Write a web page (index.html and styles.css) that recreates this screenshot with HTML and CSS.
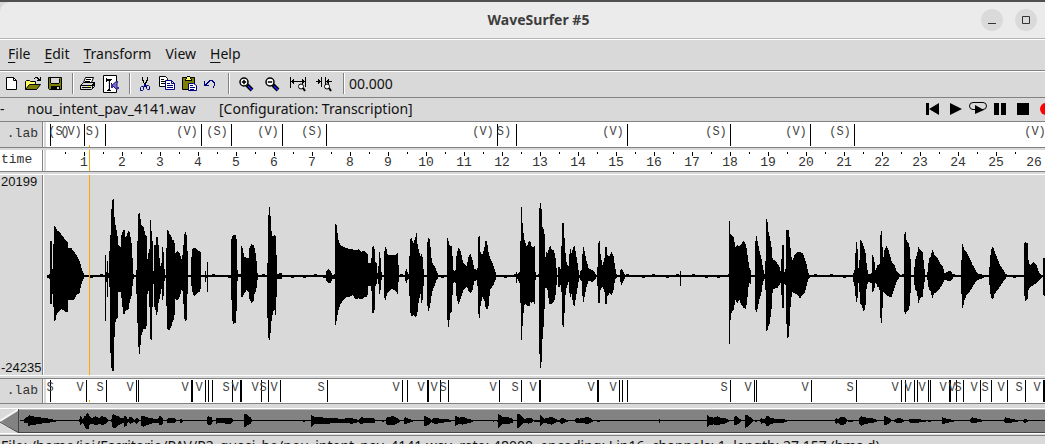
FILE: index.html
```html
<!DOCTYPE html>
<html lang="en">
<head>
<meta charset="utf-8">
<title>WaveSurfer #5</title>
<link rel="stylesheet" href="styles.css">
</head>
<body>
<div class="window">
  <header class="titlebar">
    <h1 class="title">WaveSurfer #5</h1>
    <div class="window-controls">
      <button class="round" aria-label="Minimize"><svg width="22" height="22"><path d="M7 14h8v1H7z" fill="#333"/></svg></button>
      <button class="round" aria-label="Maximize"><svg width="22" height="22"><path d="M7.500 7.500h7v7h-7z" fill="none" stroke="#333"/></svg></button>
    </div>
  </header>

  <nav class="menubar">
    <button><u>F</u>ile</button>
    <button><u>E</u>dit</button>
    <button><u>T</u>ransform</button>
    <button>View</button>
    <button><u>H</u>elp</button>
  </nav>

  <div class="toolbar">
    <button aria-label="New"><svg width="16" height="16"><path d="M3.500 1.500h7l3 3v9h-10z" fill="#fff" stroke="#000"/><path d="M10.500 1.500v3h3" fill="none" stroke="#000"/></svg></button>
    <button aria-label="Open"><svg width="16" height="16"><path d="M.5 13.500v-8l1-1h3l1 1h5v3" fill="#ffff66" stroke="#000"/><path d="M.5 13.500l4-5h11l-4 5z" fill="#808000" stroke="#000"/><path d="M9 3V2h1V1h3v1h1v1h1V1h1v4h-4V4h1V3h-1V2h-2v1z" fill="#000"/></svg></button>
    <button aria-label="Save"><svg width="16" height="16"><path d="M1.500 1.500h13v12h-12l-1-1z" fill="#808000" stroke="#000"/><path d="M4 2h8v6H4z" fill="#d9d9d9"/><path d="M4 7h8v1H4zM4 10h9v4H4zM3 2h1v5H3zM12 3h1v4h-1z" fill="#000"/><path d="M10 11h2v2h-2z" fill="#d9d9d9"/></svg></button>
    <span class="sep"></span>
    <button aria-label="Print"><svg width="16" height="16"><path d="M5.500 1.500h8l-2 5h-8z" fill="#fff" stroke="#000"/><path d="M6 3h5v1H6zM5 5h5v1H5z" fill="#000"/><path d="M.5 9.500l3-3h11v4l-3 3h-11z" fill="#d9d9d9" stroke="#000"/><path d="M1 9h11v1H1zM12 8h1v5h-1zM2 11h9v1H2zM13 6h2v4h-2z" fill="#000"/><path d="M8 10h2v1H8z" fill="#ff0"/></svg></button>
    <button class="prefs" aria-label="Preferences"><svg width="18" height="18"><path d="M2.500.5h13v17h-13z" fill="#fff" stroke="#000"/><path d="M5 3h1v1h5v1h-1v1H9v9h1v1H6v-1h1V6H6v1H5zM10 8h1v1h-1z" fill="#000"/><path d="M7 6h1v8H7z" fill="#d9d9d9"/><path d="M11 10l5-4v9z" fill="#7a6ad0" stroke="#22226a"/><path d="M10 9h2v4h-2zM16 6h1v2h-1zM16 12h2v2h-2z" fill="#333399"/></svg></button>
    <span class="sep"></span>
    <button aria-label="Cut"><svg width="16" height="16"><path d="M5 1h1v3h1v3h1v2H7V7H6V5H5zM10 1h1v4h-1v2H9v3H8V6h1V4h1z" fill="#000"/><g fill="none" stroke="#000080"><path d="M7.500 8v3M8.500 8v3"/><path d="M4.500 10.500h2v3l-1 1h-2v-3zM9.500 9.500h2l1 1v3h-2l-1-1z"/></g></svg></button>
    <button aria-label="Copy"><svg width="16" height="16"><path d="M.5.500h6l2 2v8h-8z" fill="#fff" stroke="#000"/><path d="M2 3h3v1H2zM2 5h5v1H2zM2 7h5v1H2z" fill="#000"/><path d="M6.500 4.500h6l3 3v6h-9z" fill="#fff" stroke="#000080"/><path d="M12.500 4.500v3h3" fill="none" stroke="#000080"/><path d="M8 7h3v1H8zM8 9h6v1H8zM8 11h6v1H8z" fill="#000080"/></svg></button>
    <button aria-label="Paste"><svg width="16" height="16"><path d="M1.500 1.500h12v12h-12z" fill="#808000" stroke="#000"/><path d="M4 3h1V1h1V0h3v1h1v2h1v2H4z" fill="#000"/><path d="M6 1h3v2H6zM5 3h5v1H5z" fill="#ffff66"/><path d="M7.500 7.500h5l3 2v5h-8z" fill="#fff" stroke="#000080"/><path d="M9 9h3v1H9zM9 11h5v1H9zM9 13h4v1H9z" fill="#000080"/></svg></button>
    <button aria-label="Undo"><svg width="16" height="16"><path d="M1 5h1v3h1V7h1V6h1V5h1V4h4v1h1v1h1v4h-1v2h-1v-2h1V7h-1V6H9V5H7v1H6v1H5v1H4v1h2v1H1z" fill="#000080"/></svg></button>
    <span class="sep"></span>
    <button class="wide" aria-label="Zoom in"><svg width="16" height="16"><circle cx="6" cy="6" r="4" fill="#fff" stroke="#000" stroke-width="1.500"/><path d="M4 5.500h4v1H4zM5.500 4h1v4h-1z" fill="#000" stroke="#000" stroke-width=".5"/><path d="M9 9l5 5" stroke="#000" stroke-width="4"/><path d="M10 10l4 4" stroke="#2222ff" stroke-width="1.500"/></svg></button>
    <button class="wide" aria-label="Zoom out"><svg width="16" height="16"><circle cx="6" cy="6" r="4" fill="#fff" stroke="#000" stroke-width="1.500"/><path d="M4 5.500h4v1H4z" fill="#000" stroke="#000" stroke-width=".5"/><path d="M9 9l5 5" stroke="#000" stroke-width="4"/><path d="M10 10l4 4" stroke="#2222ff" stroke-width="1.500"/></svg></button>
    <button class="wide" aria-label="Zoom out full"><svg width="18" height="16"><path d="M0 1h1v11H0zM15 1h1v10h-1zM1 5h14v1H1zM2 4h1v3H2zM3 3h1v5H3zM13 4h1v3h-1zM12 3h1v5h-1z" fill="#000"/><circle cx="11" cy="10.500" r="2.500" fill="#fff" stroke="#000"/><path d="M13 12l2 3" stroke="#000" stroke-width="2"/></svg></button>
    <button class="wide" aria-label="Zoom to selection"><svg width="18" height="16"><path d="M5 1h1v10H5zM9 1h1v8H9zM0 5h5v1H0zM3 4h1v3H3zM2 3h1v5H2zM10 5h6v1h-6zM11 4h1v3h-1zM12 3h1v5h-1z" fill="#000"/><circle cx="11" cy="10.500" r="2.500" fill="#fff" stroke="#000"/><path d="M13 12l2 3" stroke="#000" stroke-width="2"/></svg></button>
    <span class="sep"></span>
    <output class="clock">00.000</output>
  </div>

  <div class="filebar">
    <span class="dash">-</span>
    <span class="filename">nou_intent_pav_4141.wav</span>
    <span>[Configuration: Transcription]</span>
    <div class="transport">
      <button aria-label="To start"><svg width="14" height="14"><path d="M0 1h3v12H0zM13 1v12L3 7z"/></svg></button>
      <button aria-label="Play"><svg width="14" height="14"><path d="M1 1v12l12-6z"/></svg></button>
      <button class="loop" aria-label="Loop"><svg width="20" height="14"><rect x="1.500" y=".5" width="17" height="7" rx="3.500" fill="none" stroke="#000"/><path d="M7 3v9l9-4z"/></svg></button>
      <button aria-label="Pause"><svg width="14" height="14"><path d="M1 1h5v12H1zM8 1h5v12H8z"/></svg></button>
      <button aria-label="Stop"><svg width="14" height="14"><path d="M1 1h12v12H1z"/></svg></button>
      <button aria-label="Record"><svg width="14" height="14"><circle cx="7" cy="7" r="6" fill="#f00"/></svg></button>
    </div>
  </div>

  <main class="panes">
    <section class="pane paper">
      <div class="name tier">.lab</div>
      <div class="track"><svg id="upper" width="2000" height="25"></svg></div>
    </section>
    <section class="pane paper">
      <div class="name time">time</div>
      <div class="track"><svg id="ruler" width="2000" height="21"></svg></div>
    </section>
    <section class="pane wave">
      <div class="name range"><span>20199</span><span>-24235</span></div>
      <div class="track"><svg id="wave" width="1001" height="200" viewBox="132 165 3003 600"></svg></div>
    </section>
    <section class="pane paper">
      <div class="name tier">.lab</div>
      <div class="track"><svg id="lower" width="2000" height="24"></svg></div>
    </section>
  </main>

  <div class="overview">
    <button class="scroll" aria-label="Scroll left"><svg width="19" height="24"><path d="M0 12L19 0v24z" fill="#828282"/><path d="M0 12L19 0" stroke="#f5f5f5" stroke-width="2"/><path d="M0 13L19 24M18.500 0v24" stroke="#444" fill="none"/></svg></button>
    <div class="map"><svg id="overview" width="1026" height="22" viewBox="57 119 3078 66"></svg></div>
  </div>

  <footer class="status">File: /home/joi/Escritorio/PAV/P2_quasi_be/nou_intent_pav_4141.wav&nbsp; rate: 48000&nbsp; encoding: Lin16&nbsp; channels: 1&nbsp; length: 27.157 (hms.d)</footer>
</div>
<script src="app.js"></script>
</body>
</html>
```

FILE: styles.css
```css
* { box-sizing: border-box; }

html, body { height: 100%; }

body {
  margin: 0;
  overflow: hidden;
  background: #d9d9d9;
  color: #111;
  font: 14px/20px "Noto Sans", "Open Sans", sans-serif;
}

button {
  margin: 0;
  padding: 0;
  border: 0;
  background: none;
  color: inherit;
  font: inherit;
}

svg { display: block; flex: none; }

.window { border-top: 2px solid #505050; background: #d9d9d9; }

.titlebar {
  display: flex;
  align-items: center;
  height: 37px;
  padding-left: 96px;
  border-bottom: 1px solid #b4b4b4;
  border-top-left-radius: 10px;
  background: #ebebeb;
}

.title {
  flex: 1;
  margin: 0;
  color: #3d3d3d;
  font: bold 14px/20px "Noto Sans", "Open Sans", sans-serif;
  text-align: center;
}

.window-controls { display: flex; gap: 12px; padding-right: 8px; }

.round { width: 22px; height: 22px; border-radius: 50%; background: #dadada; }

.menubar {
  display: flex;
  align-items: center;
  gap: 14px;
  height: 32px;
  padding: 0 0 2px 8px;
  border-top: 1px solid #fff;
  border-bottom: 1px solid #828282;
}

.menubar u { text-underline-offset: 3px; text-decoration-thickness: 1px; }

.toolbar {
  display: flex;
  align-items: center;
  height: 27px;
  padding: 0 0 2px 1px;
  border-top: 1px solid #fff;
  border-bottom: 1px solid #828282;
}

.toolbar button { width: 22px; height: 20px; padding: 2px; }
.toolbar .prefs { width: 24px; padding: 1px; }
.toolbar .wide { width: 26px; padding: 2px 4px; }

.sep {
  width: 2px;
  height: 21px;
  margin: 0 4px 0 5px;
  border-left: 1px solid #828282;
  border-right: 1px solid #fff;
}

.filebar {
  display: flex;
  align-items: center;
  height: 24px;
  padding-bottom: 2px;
  overflow: hidden;
  border-bottom: 1px solid #828282;
}

.dash { width: 27px; }
.filename { width: 192px; }

.transport {
  display: flex;
  gap: 9px;
  margin-left: auto;
  margin-right: -8px;
}

.loop { margin: 0 -4px; }

.pane {
  display: flex;
  overflow: hidden;
  border-bottom: 1px solid #828282;
}

.pane + .pane { margin-top: 2px; }

.name {
  flex: none;
  width: 43px;
  padding-left: 1px;
  border-right: 1px solid #828282;
  color: #333;
  font: 13px/20px "Liberation Mono", monospace;
}

.tier { padding: 2px 4px 0 0; text-align: right; }
.time { background: #fff; }

.track { flex: 1; overflow: hidden; border-left: 1px solid #fff; }

.paper .track { background: #fff; box-shadow: inset 2px 0 #d9d9d9; }

.wave { margin-bottom: 2px; border-top: 1px solid #fff; border-bottom: 1px solid #fff; }
.wave + .pane { border-top: 1px solid #828282; }

.range {
  display: flex;
  flex-direction: column;
  justify-content: space-between;
  color: #111;
  font: 13px/14px "Liberation Sans", sans-serif;
}

.overview {
  display: flex;
  margin-top: 4px;
  border-top: 1px solid #fff;
  border-bottom: 1px solid #fff;
}

.scroll { flex: none; width: 19px; }

.map {
  flex: 1;
  overflow: hidden;
  border-top: 1px solid #b4b4b4;
  border-bottom: 1px solid #444;
  background: #828282;
}

.status {
  margin-top: 1px;
  padding-left: 1px;
  border-top: 1px solid #828282;
  white-space: nowrap;
}

.digits { fill: #333; font: 13px "Liberation Mono", monospace; text-anchor: middle; }
.mark { fill: #444; font: 12px "Liberation Mono", monospace; text-anchor: middle; }
.line { fill: #000; shape-rendering: crispEdges; }
.shape { fill: #000; shape-rendering: crispEdges; }
.cursor { fill: #ffa500; shape-rendering: crispEdges; }
```

FILE: app.js
```javascript
const NS = "http://www.w3.org/2000/svg";
const LEFT = 44;

function add(parent, tag, attrs, text) {
  const node = document.createElementNS(NS, tag);
  for (const key in attrs) node.setAttribute(key, attrs[key]);
  if (text) node.textContent = text;
  parent.appendChild(node);
  return node;
}

function bar(svg, x, y, height, width = 1, cls = "line") {
  add(svg, "rect", { x: x - LEFT, y, width, height, class: cls });
}

const upper = document.getElementById("upper");
for (const x of [50, 84, 105, 201, 231, 282, 326, 497, 516, 627, 730, 810, 854]) bar(upper, x, 2, 22);
for (const [x, t] of [[59, "(S)"], [71, "(V)"], [93, " S)"], [187, "(V)"], [217, "(S)"], [268, "(V)"], [312, "(S)"],
  [483, "(V)"], [504, " S)"], [613, "(V)"], [716, "(S)"], [796, "(V)"], [840, "(S)"], [1035, "(V)"]])
  add(upper, "text", { x: x - LEFT, y: 13, class: "mark" }, t);
bar(upper, 89, 23, 2, 1, "cursor");

const ruler = document.getElementById("ruler");
for (let n = 1; n < 52; n++) bar(ruler, 46 + 19 * n, 2, n % 2 ? 2 : 4);
for (let n = 1; n < 27; n++) add(ruler, "text", { x: 46 + 38 * n - LEFT, y: 16, class: "digits" }, String(n));
bar(ruler, 89, 0, 21, 1, "cursor");

const lower = document.getElementById("lower");
for (const x of [50, 86, 106, 136, 138, 205, 208, 212, 232, 261, 268, 280, 327, 402, 407, 440, 448, 499, 521, 619, 622, 627,
  730, 754, 756, 811, 856, 901, 905, 914, 917, 928, 930, 956, 963, 980, 991, 1007, 1025]) bar(lower, x, 1, 22);
for (const x of [191, 240, 427, 539, 597, 949, 1043]) bar(lower, x, 1, 22, 2);
for (const [t, xs] of [["S", [50, 100, 226, 263, 321, 443, 515, 724, 850, 958, 985, 1019]],
  ["V", [80, 130, 185, 199, 235, 255, 274, 396, 421, 434, 493, 533, 591, 613, 748, 805, 895, 908, 922, 943, 952, 974, 1001, 1037]]])
  for (const x of xs) add(lower, "text", { x: x - LEFT, y: 12, class: "mark" }, t);
bar(lower, 89, 21, 2, 1, "cursor");

/* Envelopes: x, top, bottom for each sample; three units per pixel. */
function envelope(svg, dx, dy, source) {
  const group = add(svg, "g", { transform: `translate(${dx} ${dy})` });
  for (const burst of source.trim().split("|")) {
    const pts = burst.trim().split(/\s+/).map(p => p.split(",").map(Number));
    const top = pts.map(p => `${p[0]},${p[1]}`);
    const bottom = pts.slice().reverse().map(p => `${p[0]},${p[2]}`);
    add(group, "polygon", { points: top.concat(bottom).join(" "), class: "shape" });
  }
}

const wave = document.getElementById("wave");
add(wave, "rect", { x: 142, y: 465, width: 3000, height: 6, class: "shape" });
for (let x = 142; x < 3100; x += 27 + (x * 7) % 23) add(wave, "rect", { x, y: x % 2 ? 463 : 468, width: 9, height: 6, class: "shape" });

envelope(wave, 0, 0, `
142,466,472 148,462,476 150,460,480 150,363,551 155,363,551 155,448,522 160,445,522 161,316,594 165,318,608 168,325,590 172,333,580 178,335,572 185,345,567 195,358,575 203,365,575 204,385,540 214,384,540 222,395,540 230,407,525 238,420,520 245,445,490 252,464,474 |
315,405,602 318,405,602 318,455,487 321,455,487 321,423,530 324,423,530 324,460,475 328,455,475 329,346,525 332,345,730 334,275,740 336,240,752 341,237,752 343,285,660 347,318,598 353,350,595 355,375,515 362,380,515 364,345,530 370,330,582 375,332,582 377,355,570 382,340,570 386,333,568 390,340,540 394,365,535 396,375,512 399,450,485 401,465,473 |
408,450,487 411,450,555 414,283,660 417,279,701 421,279,701 422,312,655 430,320,627 437,348,627 441,348,615 442,420,525 447,390,508 449,388,575 450,300,655 454,300,660 455,362,660 458,362,545 459,455,485 462,450,500 462,377,555 467,375,570 469,350,585 473,352,575 477,390,535 480,435,537 484,440,500 487,382,540 490,385,535 492,420,510 494,455,475 |
498,440,490 501,330,625 504,327,627 508,340,632 514,350,620 518,360,605 523,362,595 526,398,535 532,393,542 540,400,530 544,420,510 549,400,515 552,350,590 556,333,605 560,345,600 563,400,510 564,455,480 |
573,435,485 576,390,510 582,382,530 588,385,525 595,392,515 600,393,517 603,400,500 603,460,475 |
615,453,485 618,453,485 619,465,475 621,465,475 621,427,515 624,427,515 625,465,473 |
693,420,520 694,358,530 698,345,612 708,345,608 711,370,540 712,440,490 713,460,475 |
722,450,500 723,375,530 728,385,530 733,410,520 740,413,510 746,415,515 748,385,535 755,372,550 760,375,545 764,385,520 768,405,515 771,440,495 773,464,474 |
801,455,490 803,420,625 806,262,660 811,262,658 812,310,625 816,345,590 820,350,575 824,345,570 828,348,595 830,420,510 831,462,475 838,460,478 845,460,477 847,465,472 |
978,455,482 985,448,490 992,455,488 998,465,475 1004,462,477 1005,310,620 1010,315,600 1014,355,575 1020,375,555 1030,380,540 1040,385,530 1051,387,530`);

envelope(wave, 1050, 0, `
0,387,530 8,388,525 15,390,537 26,388,535 35,395,537 42,393,533 50,400,530 53,403,525 54,428,500 60,430,498 64,425,500 66,388,550 66,388,572 69,372,585 74,388,570 76,425,500 80,430,490 82,460,475 85,455,480 87,396,520 90,397,523 93,430,500 95,465,475 |
101,465,475 102,400,530 106,381,542 110,388,525 112,403,518 125,405,508 135,405,510 143,400,522 145,430,490 148,460,475 |
165,460,478 169,445,490 174,460,476 177,462,478 180,357,575 185,355,590 190,370,585 197,350,590 199,333,590 202,370,580 206,390,545 212,408,520 213,402,548 217,405,548 219,430,520 222,462,475 |
231,460,475 232,370,555 235,353,575 240,360,560 243,400,540 246,428,515 255,440,495 260,455,480 265,465,473 |
291,460,478 291,353,582 294,353,620 297,375,620 300,378,582 305,378,575 307,400,530 311,455,485 317,450,490 320,400,535 326,382,553 332,395,535 340,430,510 350,440,500 357,405,515 362,402,518 368,420,510 372,445,485 380,450,480 384,440,510 385,350,580 390,348,602 391,395,560 397,405,530 404,380,545 406,363,560 411,363,572 416,400,555 420,415,510 430,435,495 438,460,478 |
498,455,490 500,455,490 502,462,475 509,455,490 511,400,510 513,262,660 516,262,660 517,305,625 521,345,575 524,362,550 530,380,555 538,362,560 541,365,545 545,380,550 550,380,545 554,378,552 555,430,500 557,465,473 |
567,465,475 567,280,660 570,249,743 574,249,743 576,318,675 580,325,630 584,345,560 585,430,510 588,395,500 593,400,510 597,385,550 601,375,553 606,390,550 612,390,545 616,410,530 620,450,490 |
624,440,500 629,440,500 633,450,490 636,310,540 637,310,615 642,310,623 643,345,590 646,395,530 650,430,500 656,440,485 660,380,540 664,400,520 669,385,548 673,374,563 678,400,530 684,440,495 687,462,475 |
690,455,480 695,450,485 699,375,555 704,395,530 710,425,500 716,445,480 726,450,488 732,455,480 738,465,475 |
741,450,490 743,440,500 745,370,550 750,362,550 751,400,510 757,435,500 763,420,510 766,380,552 771,380,552 772,405,530 778,410,520 784,396,525 790,405,515 795,440,480 800,463,475 |
810,450,480 815,447,495 820,455,485 826,465,473 | 990,453,497 993,453,497 993,465,473`);

envelope(wave, 2100, 135, `
87,168,536 90,168,536 91,205,470 95,210,440 101,215,435 106,245,405 112,240,415 118,245,405 125,235,420 132,228,430 138,238,432 142,265,400 147,300,350 150,315,360 153,315,355 154,330,338 |
165,325,350 165,240,430 169,210,443 173,230,430 178,255,405 184,280,385 189,310,350 194,330,340 197,280,380 198,162,497 202,162,497 204,195,485 208,210,480 214,240,440 218,285,375 225,285,370 232,295,370 238,305,360 243,325,350 246,240,430 251,240,430 252,325,355 257,310,360 259,195,470 262,195,518 267,197,515 271,245,430 276,290,380 284,268,385 292,262,390 300,260,400 308,265,390 314,280,385 320,300,360 326,325,340 330,331,337 |
458,330,340 465,310,370 468,225,412 472,240,410 475,310,350 478,305,370 480,225,415 485,228,420 491,243,440 496,260,430 500,300,365 505,330,350 515,325,355 517,270,380 522,280,378 527,320,350 532,300,365 536,300,365 538,325,350 540,220,445 543,198,475 546,198,475 547,230,445 549,290,380 553,255,385 560,243,390 567,260,395 575,290,395 583,300,370 590,320,350 598,328,337 605,332,336 |
612,332,340 613,210,440 615,202,446 618,202,446 620,230,438 627,235,435 631,265,400 633,325,340 | 642,320,350 648,268,385 651,280,370 654,243,418 660,255,400 668,262,395 672,300,360 675,325,345 |
682,325,340 687,280,375 692,275,380 697,253,400 703,268,385 712,278,380 720,295,370 729,305,355 733,325,345 742,320,347 752,317,347 760,330,338 |
783,332,337 784,300,370 786,237,430 789,237,430 792,255,410 800,262,390 808,278,382 818,300,365 827,315,350 832,325,345 842,327,342 855,332,336 |
867,330,340 870,280,380 875,248,400 880,245,402 882,255,390 890,275,378 900,300,365 910,315,350 918,328,340 |
972,330,345 973,235,390 977,232,410 983,235,400 986,295,370 992,300,365 1000,290,360 1010,300,355 1018,325,345 1025,331,337 | 1029,280,390 1036,278,395`);
add(wave, "rect", { x: 267, y: 165, width: 3, height: 600, class: "cursor" });

const overview = document.getElementById("overview");
add(overview, "rect", { x: 60, y: 150, width: 3075, height: 3, class: "shape" });
envelope(overview, 0, 0, `
72,145,158 74,148,158 78,141,160 84,141,158 86,134,168 92,137,165 105,139,163 120,141,160 140,144,158 155,147,156 171,150,153 |
238,150,153 240,134,163 245,140,162 248,148,157 252,138,165 258,138,177 261,127,178 266,130,175 269,140,162 278,143,160 286,137,165 292,140,163 297,144,160 305,136,164 311,139,163 320,143,158 324,150,153 |
334,150,153 337,133,170 342,132,174 349,136,172 355,138,165 362,142,162 370,144,157 374,136,170 379,140,167 384,148,155 390,138,160 397,143,158 403,149,155 411,143,161 418,150,153 |
423,138,165 430,137,169 440,140,165 452,144,160 465,145,158 474,146,157 480,136,165 486,140,163 490,149,155 | 500,146,157 510,142,159 525,144,158 528,150,153 | 541,147,157 545,147,157 546,150,153 549,147,156 |
621,146,160 624,137,165 630,140,164 635,140,160 638,149,154 | 648,144,160 660,143,158 680,143,160 692,142,160 699,149,154 |
732,130,172 738,130,170 745,138,163 753,141,161 755,149,154 | 909,148,156 916,148,156 |
933,134,170 938,136,167 944,141,162 960,141,161 1000,143,159 1020,145,159 1050,144,159`);
envelope(overview, 1050, 0, `
0,144,160 8,143,160 12,147,157 20,145,158 24,150,153 30,143,160 36,141,160 45,143,158 73,144,159 76,149,154 | 96,148,155 101,148,155 |
108,144,160 114,140,165 121,139,164 127,136,165 136,140,162 145,145,158 150,149,154 | 162,149,154 164,140,163 170,143,160 180,147,156 190,150,153 |
221,150,153 223,136,167 230,139,167 238,143,162 243,149,155 252,143,160 262,142,160 272,146,157 290,147,156 303,148,155 | 314,149,155 317,134,168 322,140,163 330,142,160 336,138,163 350,144,160 369,149,155 |
430,148,155 433,148,155 | 441,148,155 444,148,155 445,130,175 450,134,170 457,140,162 468,139,162 480,142,160 488,146,157 490,150,153 |
500,149,154 503,129,176 508,131,172 514,138,163 525,146,157 535,142,160 546,144,158 550,150,153 559,148,155 570,148,155 571,133,168 575,137,165 582,145,156 592,143,160 605,140,163 615,145,158 628,150,153 635,141,161 645,146,157 654,150,153 | 675,148,155 680,142,160 687,145,158 700,143,158 712,139,161 720,143,158 730,150,153 | 742,148,154 750,148,156 | 927,146,157 930,146,157`);
envelope(overview, 2100, 0, `
20,149,154 22,134,172 27,139,165 40,142,162 52,138,165 60,142,162 78,144,159 88,150,153 | 102,149,154 103,139,164 110,138,163 117,144,160 125,150,153 |
134,148,155 136,133,172 142,135,170 150,140,163 158,147,156 | 165,148,154 172,148,155 | 180,150,153 184,143,160 190,146,157 196,145,160 200,136,168 206,138,167 211,143,160 225,145,159 245,145,159 264,150,153 |
405,148,155 408,143,161 414,147,158 420,140,163 430,140,163 438,143,160 441,150,153 450,148,156 458,148,156 460,150,153 | 477,149,155 480,139,165 485,138,166 492,140,162 500,142,160 515,143,158 530,148,155 |
551,149,155 553,137,164 560,139,163 570,145,157 575,150,153 | 582,149,155 590,145,157 600,142,159 612,150,153 | 627,147,155 635,146,158 655,146,157 680,150,153 | 684,148,155 694,148,155 |
726,150,153 727,141,162 732,143,160 750,147,156 765,150,153 | 810,149,153 815,141,160 824,142,158 850,150,153 | 912,149,154 915,141,159 922,142,158 940,147,156 955,149,154 | 968,149,154 975,145,159 983,149,154`);
```
